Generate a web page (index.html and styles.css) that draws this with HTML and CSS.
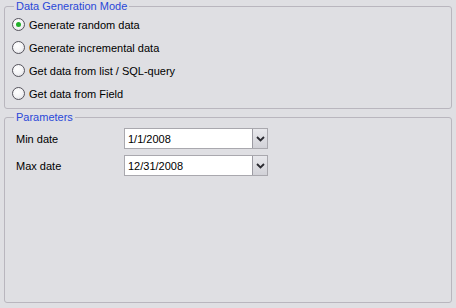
FILE: index.html
```html
<!DOCTYPE html>
<html>
<head>
<meta charset="utf-8">
<link rel="stylesheet" href="styles.css">
</head>
<body>
<div class="page">
  <fieldset class="group mode">
    <legend>Data Generation Mode</legend>
    <label class="radio checked"><span class="dot"></span>Generate random data</label>
    <label class="radio"><span class="dot"></span>Generate incremental data</label>
    <label class="radio"><span class="dot"></span>Get data from list / SQL-query</label>
    <label class="radio"><span class="dot"></span>Get data from Field</label>
  </fieldset>
  <fieldset class="group params">
    <legend>Parameters</legend>
    <div class="row">
      <span class="lbl">Min date</span>
      <div class="combo"><span class="val">1/1/2008</span><span class="btn"><svg width="9" height="6" viewBox="0 0 9 6"><path d="M1 1 L4.5 4.5 L8 1" fill="none" stroke="#2a2a30" stroke-width="1.8"/></svg></span></div>
    </div>
    <div class="row">
      <span class="lbl">Max date</span>
      <div class="combo"><span class="val">12/31/2008</span><span class="btn"><svg width="9" height="6" viewBox="0 0 9 6"><path d="M1 1 L4.5 4.5 L8 1" fill="none" stroke="#2a2a30" stroke-width="1.8"/></svg></span></div>
    </div>
  </fieldset>
</div>
</body>
</html>
```
FILE: styles.css
```css
html, body {
  margin: 0;
  padding: 0;
  background: #dfdfe3;
}
body {
  font-family: Tahoma, "Liberation Sans", Arial, sans-serif;
  font-size: 11px;
  color: #000;
  width: 456px;
  height: 308px;
  overflow: hidden;
}
.page {
  padding: 0 4px 0 4px;
  display: flex;
  flex-direction: column;
}
.group {
  margin: 0;
  border: 1px solid #b9b6be;
  border-radius: 3px;
  padding: 0;
  box-sizing: border-box;
}
.group legend {
  color: #2a48d8;
  padding: 0 2px;
  font-size: 11px;
  line-height: 13px;
}
.mode {
  height: 109px;
  padding: 0 0 0 7px;
  display: flex;
  flex-direction: column;
}
.mode legend {
  margin-left: 2px;
}
.radio {
  display: flex;
  align-items: center;
  height: 23px;
  gap: 4px;
}
.dot {
  width: 11px;
  height: 11px;
  border: 1px solid #55535c;
  border-radius: 50%;
  background: radial-gradient(circle at 40% 35%, #ffffff 0%, #f4f4f6 50%, #d6d6dc 100%);
  display: flex;
  align-items: center;
  justify-content: center;
  flex: none;
}
.checked .dot::after {
  content: "";
  width: 5px;
  height: 5px;
  border-radius: 50%;
  background: #22b02a;
}
.params {
  margin-top: 2px;
  height: 192px;
  padding: 4px 0 0 11px;
  display: flex;
  flex-direction: column;
  gap: 6px;
}
.params legend {
  margin-left: -2px;
}
.row {
  display: flex;
  align-items: center;
  height: 21px;
}
.lbl {
  width: 108px;
}
.combo {
  width: 144px;
  height: 21px;
  box-sizing: border-box;
  border: 1px solid #a9a8ae;
  background: #fff;
  display: flex;
  align-items: stretch;
}
.val {
  flex: 1;
  padding-left: 3px;
  display: flex;
  align-items: center;
  color: #000;
}
.btn {
  width: 15px;
  box-sizing: border-box;
  border-left: 1px solid #9c9ba3;
  background: linear-gradient(#e8e8ec, #d2d2d8);
  display: flex;
  align-items: center;
  justify-content: center;
}
```
